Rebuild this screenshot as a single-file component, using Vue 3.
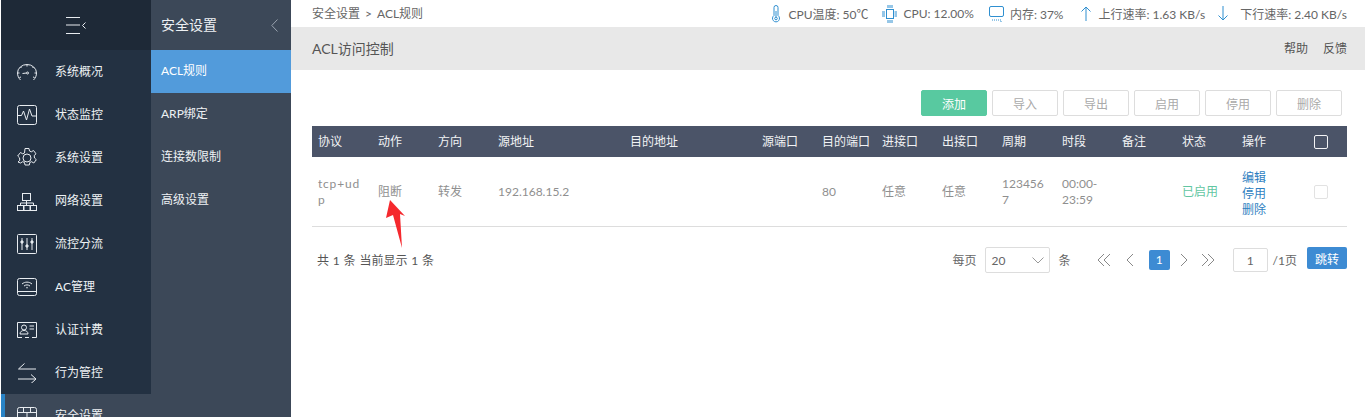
<template>
  <div class="page">
    <aside class="nav">
      <div class="nav-head">
        <svg width="20" height="17" viewBox="0 0 20 17" fill="none" stroke="#e8ecf0" stroke-width="1">
          <path d="M0 .5h14M0 8h14M0 16.500h14M19.500 5.500L16.500 8.500l3 3" />
        </svg>
      </div>
      <div
        v-for="item in navItems"
        :key="item.name"
        :class="['nav-item', { active: item.active }]"
      >
        <svg class="nav-icon" width="20" height="20" viewBox="0 0 20 20" fill="none" stroke="#e8ecf0" stroke-width="1" v-html="item.icon"></svg>
        <span>{{ item.name }}</span>
      </div>
    </aside>

    <aside class="subnav">
      <div class="subnav-head">
        <span>安全设置</span>
        <svg width="7" height="13" viewBox="0 0 7 13" fill="none" stroke="#98a2ae" stroke-width="1">
          <path d="M6.500 .5L.8 6.500l5.700 6" />
        </svg>
      </div>
      <div
        v-for="(sub, idx) in subItems"
        :key="sub"
        :class="['subnav-item', { active: idx === 0 }]"
      >{{ sub }}</div>
    </aside>

    <main class="main">
      <div class="topbar">
        <div class="crumb">安全设置<span class="crumb-sep">&gt;</span>ACL规则</div>
        <div class="stats">
          <span class="stat temp">
            <svg width="8" height="18" viewBox="0 0 8 18" fill="none" stroke="#2f8fd0" stroke-width="1">
              <path d="M2 2.500a2 2 0 0 1 4 0v8a3.500 3.500 0 1 1-4 0z" />
              <circle cx="4" cy="13.500" r="1.300" />
              <path d="M4 6v6" />
            </svg>
            CPU温度: 50℃
          </span>
          <span class="stat cpu">
            <svg width="15" height="18" viewBox="0 0 15 18" fill="none" stroke="#2f8fd0" stroke-width="1">
              <rect x="4.500" y="4.500" width="7" height="9" />
              <path d="M0 7h3M0 9h3M0 11h3M12.500 7H15M12.500 9H15M12.500 11H15M6 0v3M8 0v3M10 0v3M6 15v3M8 15v3M10 15v3" />
            </svg>
            CPU: 12.00%
          </span>
          <span class="stat mem">
            <svg width="15" height="16" viewBox="0 0 15 16" fill="none" stroke="#2f8fd0" stroke-width="1">
              <rect x=".5" y=".5" width="14" height="10" rx="1.500" />
              <path d="M3 14h9v2" stroke-dasharray="1 1" />
            </svg>
            内存: 37%
          </span>
          <span class="stat up">
            <svg width="10" height="15" viewBox="0 0 10 15" fill="none" stroke="#2f8fd0" stroke-width="1">
              <path d="M5 15V1M.5 5.500L5 1l4.500 4.500" />
            </svg>
            上行速率: 1.63 KB/s
          </span>
          <span class="stat down">
            <svg width="10" height="15" viewBox="0 0 10 15" fill="none" stroke="#2f8fd0" stroke-width="1">
              <path d="M5 0v14M.5 9.500L5 14l4.500-4.500" />
            </svg>
            下行速率: 2.40 KB/s
          </span>
        </div>
      </div>

      <div class="title-bar">
        <span class="title">ACL访问控制</span>
        <div class="title-links">
          <span>帮助</span>
          <span>反馈</span>
        </div>
      </div>

      <div class="content">
        <div class="toolbar">
          <button class="btn btn-add">添加</button>
          <button v-for="b in toolButtons" :key="b" class="btn">{{ b }}</button>
        </div>

        <table class="rules">
          <colgroup>
            <col v-for="(w, i) in colWidths" :key="i" :style="{ width: w + 'px' }" />
          </colgroup>
          <thead>
            <tr>
              <th v-for="h in headers" :key="h">{{ h }}</th>
              <th><span class="check head-check"></span></th>
            </tr>
          </thead>
          <tbody>
            <tr>
              <td class="proto">tcp+udp</td>
              <td>阻断</td>
              <td>转发</td>
              <td>192.168.15.2</td>
              <td></td>
              <td></td>
              <td>80</td>
              <td>任意</td>
              <td>任意</td>
              <td>1234567</td>
              <td>00:00-<br />23:59</td>
              <td></td>
              <td class="enabled">已启用</td>
              <td class="ops">
                <a>编辑</a>
                <a>停用</a>
                <a>删除</a>
              </td>
              <td><span class="check"></span></td>
            </tr>
          </tbody>
        </table>

        <div class="pager">
          <span class="total">共 1 条 当前显示 1 条</span>
          <div class="pager-right">
            <span class="label">每页</span>
            <div class="size-select">
              <span>20</span>
              <svg width="12" height="7" viewBox="0 0 12 7" fill="none" stroke="#999" stroke-width="1">
                <path d="M.5 .5L6 6l5.500-5.500" />
              </svg>
            </div>
            <span class="label unit">条</span>
            <svg class="pg first" width="14" height="14" viewBox="0 0 14 14" fill="none" stroke="#888" stroke-width="1">
              <path d="M7 1L1 7l6 6M13 1L7 7l6 6" />
            </svg>
            <svg class="pg prev" width="8" height="14" viewBox="0 0 8 14" fill="none" stroke="#888" stroke-width="1">
              <path d="M7 1L1 7l6 6" />
            </svg>
            <span class="current">1</span>
            <svg class="pg next" width="8" height="14" viewBox="0 0 8 14" fill="none" stroke="#888" stroke-width="1">
              <path d="M1 1l6 6-6 6" />
            </svg>
            <svg class="pg last" width="14" height="14" viewBox="0 0 14 14" fill="none" stroke="#888" stroke-width="1">
              <path d="M1 1l6 6-6 6M7 1l6 6-6 6" />
            </svg>
            <input class="page-input" value="1" />
            <span class="label pages">/1页</span>
            <button class="jump">跳转</button>
          </div>
        </div>
      </div>

      <!-- 红色标注箭头 -->
      <svg class="mark" width="20" height="50" viewBox="0 0 20 50">
        <path d="M4 0L0 18 7 15 16 48 14 14 19 16z" fill="#f5292e" />
      </svg>
    </main>
  </div>
</template>

<script setup>
const navItems = [
  { name: '系统概况', icon: '<path d="M3.500 18C1.500 16 .5 13.500.5 11a9.500 8.500 0 0 1 19 0c0 2.500-1 5-3 7"/><path d="M5.500 11.500l4-.5M1 11h1.500M17.500 11H19M10 3v1.500M3.500 5l1 1M15.500 6l1-1M2.500 15.500l1.500-.5M16 15l1.500.5"/><circle cx="10.500" cy="11" r="1"/>' },
  { name: '状态监控', icon: '<rect x=".5" y=".5" width="19" height="19" rx="2"/><path d="M1 10.500h3.500L6.500 6l3 9 3-11 2.500 7h4"/>' },
  { name: '系统设置', icon: '<circle cx="10" cy="10" r="4"/><path d="M8 .5h4l.5 2.500 1.800.8 2.200-1.300 2.500 3.300-1.800 1.700.3 2.500 1.800 1.700-2.500 3.300-2.200-1.300-1.800.8-.5 2.500H8l-.5-2.500-1.800-.8-2.200 1.300L1 14l1.800-1.700-.3-2.500L.7 8 3.500 4.500 5.700 5.800l1.800-.8z"/>' },
  { name: '网络设置', icon: '<rect x="5.500" y="2.500" width="8" height="7"/><rect x=".5" y="14.500" width="6" height="5"/><rect x="7" y="14.500" width="6" height="5"/><rect x="13.500" y="14.500" width="6" height="5"/><path d="M9.500 9.500v5M3.500 14.500v-2.500h13v2.500"/>' },
  { name: '流控分流', icon: '<rect x=".5" y=".5" width="19" height="19" rx="1"/><path d="M5 4v12M10 4v12M15 4v12"/><circle cx="5" cy="8" r="1.200" fill="#e8ecf0"/><circle cx="10" cy="12" r="1.200" fill="#e8ecf0"/><circle cx="15" cy="8" r="1.200" fill="#e8ecf0"/>' },
  { name: 'AC管理', icon: '<rect x=".5" y="1.500" width="19" height="17" rx="2"/><path d="M.5 14.500h19M5 7c3-2.500 7-2.500 10 0M7 9c2-1.500 4-1.500 6 0M9 11c.7-.5 1.300-.5 2 0"/>' },
  { name: '认证计费', icon: '<path d="M5 17.500H.5v-15h19v15H15M8 17.500h4"/><circle cx="7" cy="7.500" r="2.500"/><path d="M3 14c0-2.500 2-3.500 4-3.500s4 1 4 3.500zM12.500 6H17M12.500 9H17"/>' },
  { name: '行为管控', icon: '<path d="M19 6H1.500M7.500 .5L1.500 6M1 16h18M14 11.500l5 4.500-5 4.500"/>' },
  { name: '安全设置', active: true, icon: '<rect x=".5" y="1.500" width="19" height="18" rx="2"/><path d="M.5 6.500h19M6.500 1.500v5M13.500 1.500v5M10 6.500v6M.5 12.500h19M6.500 12.500v7M13.500 12.500v7"/>' }
]

const subItems = ['ACL规则', 'ARP绑定', '连接数限制', '高级设置']

const toolButtons = ['导入', '导出', '启用', '停用', '删除']

const headers = ['协议', '动作', '方向', '源地址', '目的地址', '源端口', '目的端口', '进接口', '出接口', '周期', '时段', '备注', '状态', '操作']

const colWidths = [60, 60, 60, 132, 132, 60, 60, 60, 60, 60, 60, 60, 60, 60, 51]
</script>

<style>
html,
body {
  margin: 0;
  height: 100%;
  overflow: hidden;
  background: #fff;
}
</style>

<style scoped>
.page {
  display: flex;
  height: 417px;
  padding-left: 1px;
  box-sizing: border-box;
  overflow: hidden;
  font-family: Lato, 'Noto Sans CJK SC', sans-serif;
  font-size: 12px;
  color: #666;
}

.nav {
  width: 150px;
  flex-shrink: 0;
  background: #233142;
}

.nav-head {
  height: 50px;
  background: #1e2937;
  display: flex;
  align-items: center;
  justify-content: center;
}

.nav-item {
  height: 43px;
  display: flex;
  align-items: center;
  padding-left: 16px;
  color: #eef1f4;
  font-size: 12px;
  box-sizing: border-box;
}

.nav-item span {
  margin-left: 18px;
  padding-bottom: 2px;
}

.nav-item.active {
  background: #3c4858;
  border-left: 4px solid #2a84c6;
  padding-left: 12px;
}

.nav-icon {
  flex-shrink: 0;
}

.subnav {
  width: 140px;
  flex-shrink: 0;
  background: #3c4858;
  color: #eef1f4;
}

.subnav-head {
  height: 50px;
  display: flex;
  align-items: center;
  justify-content: space-between;
  padding: 0 13px 0 10px;
  font-size: 14px;
}

.subnav-head span {
  padding-bottom: 3px;
}

.subnav-item {
  height: 43px;
  line-height: 41px;
  padding-left: 10px;
  font-size: 12px;
}

.subnav-item.active {
  background: #529bdb;
  color: #fff;
}

.main {
  flex: 1;
  min-width: 0;
  position: relative;
}

.topbar {
  height: 27px;
  display: flex;
  justify-content: space-between;
  align-items: center;
  padding: 0 18px 0 21px;
}

.crumb {
  font-size: 12px;
  color: #666;
  padding-bottom: 2px;
}

.crumb-sep {
  margin: 0 5px;
}

.stats {
  display: flex;
  align-items: center;
  font-size: 12px;
  color: #666;
}

.stat {
  display: flex;
  align-items: center;
  gap: 8px;
  white-space: nowrap;
}

.cpu {
  margin-left: 14px;
  gap: 6px;
}

.mem {
  margin-left: 15px;
  gap: 6px;
}

.up {
  margin-left: 17px;
  gap: 8px;
}

.down {
  margin-left: 13px;
  gap: 12px;
}

.title-bar {
  height: 43px;
  background: #e8e8e8;
  display: flex;
  justify-content: space-between;
  align-items: center;
  padding: 0 18px 0 21px;
}

.title {
  font-size: 14px;
  color: #555;
  padding-bottom: 2px;
}

.title-links {
  display: flex;
  gap: 15px;
  font-size: 12px;
  color: #555;
  padding-bottom: 2px;
}

.content {
  padding: 20px 18px 0 21px;
}

.toolbar {
  display: flex;
  justify-content: flex-end;
  gap: 5px;
  padding-right: 5px;
  margin-bottom: 10px;
}

.btn {
  width: 66px;
  height: 26px;
  padding: 0;
  border: 1px solid #ddd;
  border-radius: 2px;
  background: #fff;
  color: #aaa;
  font: inherit;
}

.btn-add {
  background: #58c9a0;
  border-color: #58c9a0;
  color: #fff;
}

.rules {
  width: 1035px;
  table-layout: fixed;
  border-collapse: collapse;
}

.rules th {
  height: 29px;
  padding: 0 6px 2px;
  background: #4b5468;
  color: #f2f3f5;
  font-weight: 400;
  text-align: left;
  white-space: nowrap;
}

.rules td {
  height: 68px;
  padding: 1px 6px 0;
  border-bottom: 1px solid #ddd;
  color: #8f8f8f;
  line-height: 16px;
  overflow-wrap: anywhere;
}

.rules td.proto {
  letter-spacing: .8px;
}

.rules td.enabled {
  color: #62c6a2;
}

.rules td.ops {
  height: 65px;
  padding-top: 4px;
}

.ops a {
  display: block;
  color: #2f7fc1;
}

.check {
  display: block;
  width: 12px;
  height: 12px;
  margin-left: 12px;
  border: 1px solid #e2e2e2;
  border-radius: 2px;
  background: #fff;
}

.head-check {
  border-color: #f2f3f5;
  background: transparent;
  margin-top: 2px;
}

.pager {
  width: 1035px;
  display: flex;
  justify-content: space-between;
  align-items: center;
  margin-top: 20px;
}

.total {
  padding-left: 5px;
  padding-bottom: 2px;
  color: #555;
  word-spacing: .75px;
}

.pager-right {
  display: flex;
  align-items: center;
  color: #666;
}

.label {
  padding-bottom: 2px;
}

.size-select {
  box-sizing: border-box;
  width: 65px;
  height: 26px;
  margin-left: 8px;
  padding: 0 5px 0 6px;
  display: flex;
  align-items: center;
  justify-content: space-between;
  border: 1px solid #ddd;
  border-radius: 2px;
}

.unit {
  margin-left: 9px;
}

.pg {
  flex-shrink: 0;
}

.first {
  margin-left: 26px;
}

.prev {
  margin-left: 15px;
}

.current {
  width: 21px;
  height: 20px;
  margin-left: 15px;
  line-height: 20px;
  text-align: center;
  background: #3d8bd3;
  border-radius: 2px;
  color: #fff;
}

.next {
  margin-left: 10px;
}

.last {
  margin-left: 13px;
}

.page-input {
  box-sizing: border-box;
  width: 35px;
  height: 24px;
  margin-left: 18px;
  padding: 0;
  border: 1px solid #ddd;
  border-radius: 2px;
  text-align: center;
  font: inherit;
  color: #666;
  outline: none;
}

.pages {
  margin-left: 5px;
}

.jump {
  align-self: flex-start;
  width: 40px;
  height: 22px;
  margin-left: 10px;
  padding: 0;
  border: none;
  border-radius: 2px;
  background: #3d8bd3;
  color: #fff;
  font: inherit;
}

.mark {
  position: absolute;
  left: 95px;
  top: 200px;
}
</style>
